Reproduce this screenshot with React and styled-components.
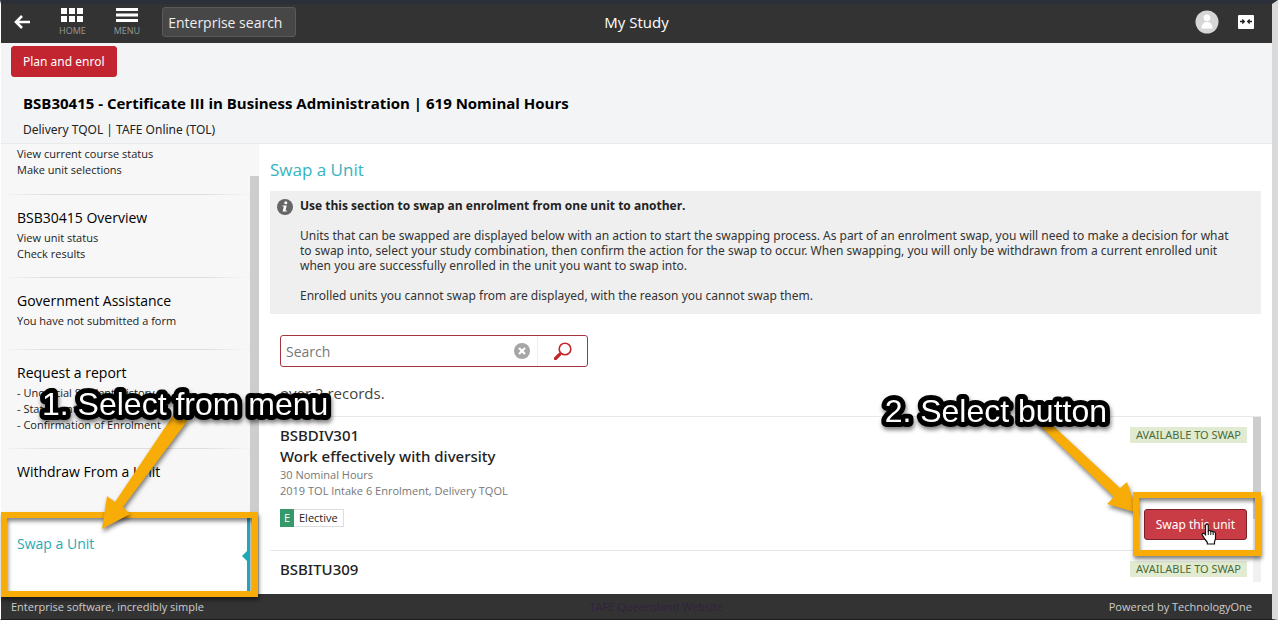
import React from "react";
import styled, { createGlobalStyle } from "styled-components";

const menuSections = [
  { lines: ["View current course status", "Make unit selections"] },
  { title: "BSB30415 Overview", lines: ["View unit status", "Check results"] },
  { title: "Government Assistance", lines: ["You have not submitted a form"] },
  {
    title: "Request a report",
    lines: [
      "- Unofficial Student History",
      "- Statement of Results",
      "- Confirmation of Enrolment",
    ],
  },
  { title: "Withdraw From a Unit", lines: [] },
  { title: "Swap a Unit", lines: [], active: true },
];

const units = [
  {
    code: "BSBDIV301",
    name: "Work effectively with diversity",
    hours: "30 Nominal Hours",
    intake: "2019 TOL Intake 6 Enrolment, Delivery TQOL",
  },
  { code: "BSBITU309" },
];

const App = () => {
  return (
    <Page>
      <GlobalStyle />
      <TopBar>
        <BarGroup>
          <IconButton aria-label="Back">
            <svg width="16" height="14" viewBox="0 0 16 14">
              <path
                d="M8 1 2 7l6 6M2 7h14"
                fill="none"
                stroke="#fff"
                strokeWidth="2.6"
              />
            </svg>
          </IconButton>
          <IconButton>
            <svg width="22" height="14" viewBox="0 0 22 14" fill="#fff">
              <path d="M0 0h6v6H0zM8 0h6v6H8zM16 0h6v6h-6zM0 8h6v6H0zM8 8h6v6H8zM16 8h6v6h-6z" />
            </svg>
            HOME
          </IconButton>
          <IconButton>
            <svg width="22" height="14" viewBox="0 0 22 14" fill="#fff">
              <path d="M0 0h22v3H0zM0 5.500h22v3H0zM0 11h22v3H0z" />
            </svg>
            MENU
          </IconButton>
          <EnterpriseSearch
            aria-label="Enterprise search"
            placeholder="Enterprise search"
          />
        </BarGroup>
        <BarTitle>My Study</BarTitle>
        <BarGroup $end>
          <IconButton aria-label="Profile">
            <svg width="24" height="24" viewBox="0 0 24 24">
              <circle cx="12" cy="12" r="11.500" fill="#d6d6d6" />
              <circle cx="12" cy="7.800" r="3.400" fill="#fff" />
              <path d="M6.500 18.500c0-4 2-6.500 5.500-6.500s5.500 2.500 5.500 6.500z" fill="#fff" />
            </svg>
          </IconButton>
          <IconButton aria-label="Collapse">
            <svg width="16" height="14" viewBox="0 0 16 14">
              <rect width="16" height="14" rx="1" fill="#fff" />
              <path
                d="M2 6.500h4M4.300 4.500l2 2-2 2M14 6.500h-4M11.700 4.500l-2 2 2 2"
                fill="none"
                stroke="#222"
                strokeWidth="1.300"
              />
            </svg>
          </IconButton>
        </BarGroup>
      </TopBar>

      <CourseHeader>
        <RedButton>Plan and enrol</RedButton>
        <h1>
          BSB30415 - Certificate III in Business Administration | 619 Nominal
          Hours
        </h1>
        <p>Delivery TQOL | TAFE Online (TOL)</p>
      </CourseHeader>

      <Body>
        <Sidebar>
          <Menu>
            {menuSections.map((section) => (
              <MenuItem
                key={section.title || "course"}
                $active={section.active}
                $first={!section.title}
              >
                {section.title && <h2>{section.title}</h2>}
                {section.lines.map((line) => (
                  <p key={line}>{line}</p>
                ))}
              </MenuItem>
            ))}
          </Menu>
          <ScrollTrack>
            <ScrollThumb $start={32} />
          </ScrollTrack>
        </Sidebar>

        <Content>
          <SectionTitle>Swap a Unit</SectionTitle>
          <InfoBox>
            <svg width="16" height="16" viewBox="0 0 16 16">
              <circle cx="8" cy="8" r="8" fill="#666" />
              <circle cx="8.800" cy="3.700" r="1.500" fill="#fff" />
              <path d="M5.500 6.400h4.200l-1.200 5h1.300v1.200H5.600l1.300-5H5.500z" fill="#fff" />
            </svg>
            <div>
              <strong>
                Use this section to swap an enrolment from one unit to another.
              </strong>
              <p>
                Units that can be swapped are displayed below with an action to
                start the swapping process. As part of an enrolment swap, you
                will need to make a decision for what to swap into, select your
                study combination, then confirm the action for the swap to
                occur. When swapping, you will only be withdrawn from a current
                enrolled unit when you are successfully enrolled in the unit you
                want to swap into.
              </p>
              <p>
                Enrolled units you cannot swap from are displayed, with the
                reason you cannot swap them.
              </p>
            </div>
          </InfoBox>

          <SearchBox>
            <input aria-label="Search" placeholder="Search" />
            <button aria-label="Clear">
              <svg width="16" height="16" viewBox="0 0 16 16">
                <circle cx="8" cy="8" r="8" fill="#a6a6a6" />
                <path d="m5 5 6 6M11 5l-6 6" stroke="#fff" strokeWidth="2.200" />
              </svg>
            </button>
            <SearchButton aria-label="Run search">
              <svg width="18" height="18" viewBox="0 0 18 18" fill="none" stroke="#c1272d">
                <circle cx="11" cy="7" r="5.800" strokeWidth="1.600" />
                <path d="m6.800 11.200-1.600 1.600" strokeWidth="1.600" />
                <path d="m5.500 12.500-4 4" strokeWidth="3.200" strokeLinecap="round" />
              </svg>
            </SearchButton>
          </SearchBox>
          <Records>over 2 records.</Records>

          <Results>
            <UnitList>
              {units.map((unit) => (
                <UnitRow key={unit.code}>
                  <UnitInfo>
                    <h3>{unit.code}</h3>
                    {unit.name && <h3>{unit.name}</h3>}
                    {unit.hours && <p>{unit.hours}</p>}
                    {unit.intake && <p>{unit.intake}</p>}
                    {unit.name && (
                      <Tag>
                        <b>E</b>
                        <span>Elective</span>
                      </Tag>
                    )}
                  </UnitInfo>
                  <UnitActions>
                    <Status>AVAILABLE TO SWAP</Status>
                    {unit.name && <RedButton $hover>Swap this unit</RedButton>}
                  </UnitActions>
                </UnitRow>
              ))}
            </UnitList>
            <ScrollTrack $light>
              <ScrollThumb $size={102} />
            </ScrollTrack>
          </Results>
        </Content>
      </Body>

      <Footer>
        <span>Enterprise software, incredibly simple</span>
        <a href="#website">TAFE Queensland Website</a>
        <span>Powered by TechnologyOne</span>
      </Footer>

      <MenuHighlight />
      <MenuArrow width="110" height="132" viewBox="0 0 110 132">
        <path d="M80 9 94 15 29 102 36 109 8 124 13 91 21 97z" fill="#f8ac08" />
      </MenuArrow>
      <MenuCallout width="300" height="48">
        <text x="8" y="34">
          1. Select from menu
        </text>
      </MenuCallout>

      <ButtonArrow width="110" height="110" viewBox="0 0 110 110">
        <path d="M20 18 92 85 99 79 110 110 79 101 86 94 6 17z" fill="#f8ac08" />
      </ButtonArrow>
      <ButtonHighlight />
      <ButtonCallout width="240" height="48">
        <text x="232" y="34" textAnchor="end">
          2. Select button
        </text>
      </ButtonCallout>
      <Pointer width="18" height="22" viewBox="0 0 18 22">
        <path
          d="M5 1.500c1-.8 2.300-.2 2.300 1V8c.8-.8 2-.6 2.400.4.900-.6 2-.3 2.400.6 1-.5 2.400 0 2.400 1.400v4.800c0 1.600-1 2.600-1 3.600V21H6.300v-1.600C5 17.500 3.800 16.500 2.800 14.500 2 13 .7 12 1.200 11c.5-1 2-.8 3.300.6V2.500z"
          fill="#fff"
          stroke="#111"
          strokeWidth="1.200"
        />
        <path d="M7.300 8v4M9.800 8.600V12M12.200 9.200V12" stroke="#111" />
      </Pointer>
    </Page>
  );
};

const GlobalStyle = createGlobalStyle`
  * {
    margin: 0;
    padding: 0;
    box-sizing: border-box;
  }

  body {
    font-family: "Open Sans", sans-serif;
    color: #222;
    background: #fff;
  }

  button, input {
    font-family: inherit;
  }
`;

const Page = styled.div`
  position: relative;
  display: flex;
  flex-direction: column;
  height: 100vh;
  border-top: 4px solid #2b3038;
  border-right: 6px solid #d9d9d9;
  border-left: 1px solid #fff;
  border-bottom: 1px solid #1d1d1d;
`;

const TopBar = styled.header`
  display: grid;
  grid-template-columns: 1fr auto 1fr;
  align-items: center;
  flex: none;
  height: 39px;
  padding: 0 12px 3px;
  background: #333;
`;

const IconButton = styled.button`
  display: flex;
  flex-direction: column;
  align-items: center;
  gap: 3px;
  min-width: 18px;
  border: 0;
  background: none;
  color: #999;
  font-size: 9px;
  line-height: 12px;
`;

const BarGroup = styled.div`
  display: flex;
  align-items: center;
  justify-content: ${({ $end }) => ($end ? "flex-end" : "flex-start")};
  gap: ${({ $end }) => ($end ? "12px" : "22px")};
  padding-right: ${({ $end }) => ($end ? "5px" : 0)};

  ${IconButton} + ${IconButton} {
    margin-left: 6px;
  }
`;

const BarTitle = styled.div`
  color: #fff;
  font-size: 15px;
`;

const EnterpriseSearch = styled.input`
  width: 134px;
  height: 30px;
  padding: 0 5px;
  border: 1px solid #5a5a5a;
  border-radius: 3px;
  background: #474747;
  font-size: 14px;

  &::placeholder {
    color: #eee;
  }
`;

const RedButton = styled.button`
  height: 31px;
  padding: 0 11px;
  border: 1px solid ${({ $hover }) => ($hover ? "#7d1f27" : "#c32530")};
  border-radius: 3px;
  background: ${({ $hover }) => ($hover ? "#c93c46" : "#c32530")};
  color: #fff;
  font-family: "Noto Sans", sans-serif;
  font-size: 12px;
  white-space: nowrap;
`;

const CourseHeader = styled.section`
  flex: none;
  height: 101px;
  padding: 3px 10px;
  border-bottom: 1px solid #e8eaec;
  background: #f3f4f6;

  h1 {
    margin: 16px 12px 0;
    color: #000;
    font-size: 15px;
    font-weight: 700;
    line-height: 20px;
  }

  p {
    margin: 8px 12px 0;
    font-family: "Noto Sans", sans-serif;
    font-size: 12px;
    line-height: 18px;
  }
`;

const Body = styled.main`
  display: flex;
  flex: 1;
  min-height: 0;
`;

const Sidebar = styled.aside`
  display: flex;
  flex: none;
  width: 258px;
  overflow: hidden;
  background: #f7f7f7;
`;

const Menu = styled.nav`
  flex: 1;
`;

const MenuItem = styled.div`
  position: relative;
  min-height: ${({ $first, $active }) => ($first ? 0 : $active ? 80 : 72)}px;
  padding: ${({ $first }) => ($first ? "2px 16px 16px" : "13px 16px 15px")};
  border-bottom: 1px solid;
  border-image: linear-gradient(90deg, transparent, #ddd 20%, #ddd 80%, transparent) 1;
  background: ${({ $active }) => ($active ? "#fff" : "none")};

  ${({ $active }) =>
    $active &&
    `
    margin-top: -5px;
    padding-top: 18px;
    border-right: 3px solid #1fa9b8;
    border-image: none;
    border-bottom: 0;

    &::after {
      content: "";
      position: absolute;
      top: 35px;
      right: 0;
      border: 5px solid transparent;
      border-left: 0;
      border-right-color: #1fa9b8;
    }
  `}

  h2 {
    margin-bottom: 2px;
    color: ${({ $active }) => ($active ? "#2aa9b5" : "#000")};
    font-size: 14px;
    font-weight: 500;
    line-height: 20px;
  }

  p {
    font-size: 11px;
    line-height: 16px;
  }
`;

const ScrollTrack = styled.div`
  flex: none;
  width: ${({ $light }) => ($light ? "8px" : "9px")};
  background: ${({ $light }) => ($light ? "#f1f1f1" : "#f7f7f7")};
`;

const ScrollThumb = styled.div`
  height: ${({ $size }) => ($size ? `${$size}px` : "100%")};
  margin-top: ${({ $start }) => $start || 0}px;
  background: #cdcdcd;
`;

const Content = styled.section`
  display: flex;
  flex: 1;
  flex-direction: column;
  min-width: 0;
  padding: 14px 11px 12px 11px;
`;

const SectionTitle = styled.h2`
  color: #35b4c0;
  font-size: 17px;
  font-weight: 400;
  line-height: 24px;
`;

const InfoBox = styled.div`
  display: flex;
  gap: 7px;
  flex: none;
  margin-top: 9px;
  padding: 7px 28px 11px 7px;
  background: #efefef;
  font-family: "Noto Sans", sans-serif;
  font-size: 12px;
  line-height: 15px;

  svg {
    flex: none;
    margin-top: 1px;
  }

  strong {
    font-family: "Open Sans", sans-serif;
  }

  p {
    margin-top: 15px;
    color: #333;
  }
`;

const SearchBox = styled.div`
  display: flex;
  flex: none;
  width: 308px;
  height: 32px;
  margin: 21px 0 0 10px;
  border: 1px solid #a3363f;
  border-radius: 3px;

  input {
    flex: 1;
    min-width: 0;
    padding: 0 5px;
    border: 0;
    background: none;
    font-size: 14px;
  }

  input::placeholder {
    color: #777;
  }

  button {
    display: flex;
    align-items: center;
    justify-content: center;
    width: 30px;
    border: 0;
    background: none;
  }
`;

const SearchButton = styled.button`
  && {
    width: 50px;
    border-left: 1px solid #eee;
  }
`;

const Records = styled.p`
  margin: 16px 10px 13px;
  color: #444;
  font-size: 15px;
  line-height: 20px;
`;

const Results = styled.div`
  display: flex;
  flex: 1;
  min-height: 0;
  overflow: hidden;
  border-top: 1px solid #e8e8e8;
`;

const UnitList = styled.div`
  flex: 1;
`;

const UnitRow = styled.article`
  display: flex;
  justify-content: space-between;
  padding: 8px 6px 8px 10px;
  border-bottom: 1px solid #e8e8e8;
`;

const UnitInfo = styled.div`
  min-height: 117px;

  h3 {
    font-family: "Noto Sans", sans-serif;
    font-size: 15px;
    font-weight: 500;
    line-height: 21px;
  }

  p {
    color: #777;
    font-size: 11px;
    line-height: 16px;
  }
`;

const Tag = styled.div`
  display: inline-flex;
  margin-top: 10px;
  font-size: 11px;
  line-height: 16px;

  b {
    width: 14px;
    padding: 1px 0;
    background: #35996a;
    color: #fff;
    font-weight: 400;
    text-align: center;
  }

  span {
    padding: 0 5px;
    border: 1px solid #ddd;
    border-left: 0;
  }
`;

const UnitActions = styled.div`
  display: flex;
  flex-direction: column;
  align-items: flex-end;
  justify-content: space-between;
  padding: 2px 0;
`;

const Status = styled.span`
  padding: 0 6px;
  background: #e1ebd2;
  color: #4a6b35;
  font-family: "Noto Sans", sans-serif;
  font-size: 11px;
  line-height: 16px;
`;

const Footer = styled.footer`
  display: flex;
  align-items: center;
  justify-content: space-between;
  flex: none;
  height: 25px;
  padding: 0 20px 0 10px;
  background: #333;
  color: #ccc;
  font-size: 11px;

  a {
    color: #32213f;
    text-decoration: none;
  }
`;

const Highlight = styled.div`
  position: absolute;
  border: 6px solid #f8ac08;
  box-shadow: 1px 3px 4px rgba(0, 0, 0, 0.5), inset 1px 3px 4px rgba(0, 0, 0, 0.5);
  pointer-events: none;
`;

const MenuHighlight = styled(Highlight)`
  bottom: 22px;
  left: 0;
  width: 257px;
  height: 85px;
`;

const ButtonHighlight = styled(Highlight)`
  right: 11px;
  bottom: 63px;
  width: 128px;
  height: 64px;
`;

const Arrow = styled.svg`
  position: absolute;
  filter: drop-shadow(1px 3px 2px rgba(0, 0, 0, 0.5));
  pointer-events: none;
`;

const MenuArrow = styled(Arrow)`
  bottom: 82px;
  left: 93px;
`;

const ButtonArrow = styled(Arrow)`
  right: 134px;
  bottom: 106px;
`;

const Callout = styled.svg`
  position: absolute;
  filter: drop-shadow(1px 3px 2px rgba(0, 0, 0, 0.5));
  pointer-events: none;

  text {
    fill: #fff;
    stroke: #000;
    stroke-width: 10px;
    stroke-linejoin: round;
    paint-order: stroke;
    font-family: "Liberation Sans", Arial, sans-serif;
    font-size: 32px;
  }
`;

const MenuCallout = styled(Callout)`
  bottom: 190px;
  left: 33px;
`;

const ButtonCallout = styled(Callout)`
  right: 157px;
  bottom: 183px;
`;

const Pointer = styled.svg`
  position: absolute;
  right: 53px;
  bottom: 74px;
  pointer-events: none;
`;

export default App;
